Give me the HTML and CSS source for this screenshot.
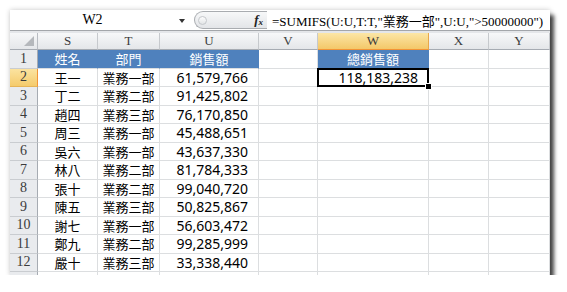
FILE: index.html
```html
<!DOCTYPE html>
<html lang="zh-Hant">
<head>
  <meta charset="UTF-8" />
  <title>SUMIFS</title>
  <link rel="stylesheet" href="styles.css">
</head>
<body>
  <div class="window">
    <div class="formula-bar">
      <div class="name-box">W2</div>
      <div class="name-arrow"></div>
      <div class="fx-pill">
        <span class="knob"></span>
        <span class="fx">f<sub>x</sub></span>
      </div>
      <div class="formula">=SUMIFS(U:U,T:T,"業務一部",U:U,"&gt;50000000")</div>
    </div>
    <div class="bar-sep"></div>

    <div class="sheet">
      <!-- column headers -->
      <div class="corner"><span class="tri"></span></div>
      <div class="ch">S</div>
      <div class="ch">T</div>
      <div class="ch">U</div>
      <div class="ch">V</div>
      <div class="ch sel">W</div>
      <div class="ch">X</div>
      <div class="ch">Y</div>

      <div class="rh">1</div>
      <div class="c hd">姓名</div>
      <div class="c hd">部門</div>
      <div class="c hd">銷售額</div>
      <div class="c"></div>
      <div class="c hd">總銷售額</div>
      <div class="c"></div>
      <div class="c"></div>

      <div class="rh sel">2</div>
      <div class="c">王一</div>
      <div class="c">業務一部</div>
      <div class="c num">61,579,766</div>
      <div class="c"></div>
      <div class="c num active">118,183,238</div>
      <div class="c"></div>
      <div class="c"></div>

      <div class="rh">3</div>
      <div class="c">丁二</div>
      <div class="c">業務二部</div>
      <div class="c num">91,425,802</div>
      <div class="c"></div><div class="c"></div><div class="c"></div><div class="c"></div>

      <div class="rh">4</div>
      <div class="c">趙四</div>
      <div class="c">業務三部</div>
      <div class="c num">76,170,850</div>
      <div class="c"></div><div class="c"></div><div class="c"></div><div class="c"></div>

      <div class="rh">5</div>
      <div class="c">周三</div>
      <div class="c">業務一部</div>
      <div class="c num">45,488,651</div>
      <div class="c"></div><div class="c"></div><div class="c"></div><div class="c"></div>

      <div class="rh">6</div>
      <div class="c">吳六</div>
      <div class="c">業務一部</div>
      <div class="c num">43,637,330</div>
      <div class="c"></div><div class="c"></div><div class="c"></div><div class="c"></div>

      <div class="rh">7</div>
      <div class="c">林八</div>
      <div class="c">業務二部</div>
      <div class="c num">81,784,333</div>
      <div class="c"></div><div class="c"></div><div class="c"></div><div class="c"></div>

      <div class="rh">8</div>
      <div class="c">張十</div>
      <div class="c">業務二部</div>
      <div class="c num">99,040,720</div>
      <div class="c"></div><div class="c"></div><div class="c"></div><div class="c"></div>

      <div class="rh">9</div>
      <div class="c">陳五</div>
      <div class="c">業務三部</div>
      <div class="c num">50,825,867</div>
      <div class="c"></div><div class="c"></div><div class="c"></div><div class="c"></div>

      <div class="rh">10</div>
      <div class="c">謝七</div>
      <div class="c">業務一部</div>
      <div class="c num">56,603,472</div>
      <div class="c"></div><div class="c"></div><div class="c"></div><div class="c"></div>

      <div class="rh">11</div>
      <div class="c">鄭九</div>
      <div class="c">業務二部</div>
      <div class="c num">99,285,999</div>
      <div class="c"></div><div class="c"></div><div class="c"></div><div class="c"></div>

      <div class="rh">12</div>
      <div class="c">嚴十</div>
      <div class="c">業務三部</div>
      <div class="c num">33,338,440</div>
      <div class="c"></div><div class="c"></div><div class="c"></div><div class="c"></div>

      <!-- row 13 is cut off by the window edge -->
      <div class="rh"></div>
      <div class="c"></div><div class="c"></div><div class="c"></div><div class="c"></div>
      <div class="c"></div><div class="c"></div><div class="c"></div>
    </div>
  </div>
</body>
</html>
```

FILE: styles.css
```css
body {
  margin: 0;
  background: #fff;
}

.window {
  margin: 10px 0 0 10px;
  width: 540px;
  height: 265px;
  overflow: hidden;
  background: #fff;
  box-shadow: 4px 5px 4px rgba(0, 0, 0, 0.72), 0 0 5px rgba(0, 0, 0, 0.22);
}

/* formula bar */
.formula-bar {
  display: flex;
  align-items: center;
  height: 20px;
  border-bottom: 1px solid #a3a6aa;
  font-family: "Liberation Serif", "Noto Sans CJK TC", serif;
  color: #000;
}

.name-box {
  width: 165px;
  text-align: center;
  font-size: 14px;
}

.name-arrow {
  width: 0;
  height: 0;
  margin: 1px 6px 0 4px;
  border-left: 3px solid transparent;
  border-right: 3px solid transparent;
  border-top: 4px solid #333;
}

.fx-pill {
  display: flex;
  align-items: center;
  justify-content: space-between;
  box-sizing: border-box;
  width: 73px;
  height: 18px;
  margin-left: 3px;
  padding: 0 4px 0 3px;
  border: 1px solid #a9acb0;
  border-right: none;
  border-radius: 9px 0 0 9px;
  background: linear-gradient(#f7f8f9, #e3e5e8);
}

.knob {
  width: 7px;
  height: 7px;
  border-radius: 50%;
  border: 1px solid #c4c7cb;
  background: linear-gradient(#fdfdfd, #e2e4e6);
}

.fx {
  font-size: 13px;
  font-style: italic;
  font-weight: bold;
  color: #222;
  line-height: 1;
}

.fx sub {
  font-size: 9px;
  vertical-align: -1px;
}

.formula {
  margin-left: 5px;
  font-size: 13px;
  white-space: nowrap;
}

.bar-sep {
  height: 2px;
  background: #e4e6e9;
}

/* grid */
.sheet {
  display: grid;
  grid-template-columns: 28px 60px 62px 99px 59px 111px 60px 61px;
  grid-template-rows: 17px repeat(13, 18.5px);
}

.sheet > div {
  box-sizing: border-box;
  display: flex;
  align-items: center;
  justify-content: center;
  white-space: nowrap;
}

.corner {
  position: relative;
  background: linear-gradient(#f6f7f8, #e5e7ea);
  border-right: 1px solid #b8bcc2;
  border-bottom: 1px solid #a6abb2;
}

.tri {
  position: absolute;
  right: 3px;
  bottom: 3px;
  width: 0;
  height: 0;
  border-left: 10px solid transparent;
  border-bottom: 10px solid #b5b8bc;
}

.ch {
  font-family: "Liberation Serif", serif;
  font-size: 13px;
  color: #3b3b3b;
  background: linear-gradient(#f7f8f9, #e4e6e9);
  border-right: 1px solid #c6c9cd;
  border-bottom: 1px solid #a6abb2;
}

.ch.sel {
  background: linear-gradient(#fbe6a6, #f3c869);
  border-right-color: #e8a84a;
  border-bottom: 1px solid #f29436;
}

.rh {
  font-family: "Liberation Serif", serif;
  font-size: 14px;
  color: #3b3b3b;
  background: #e9ebee;
  border-right: 1px solid #a6abb2;
  border-bottom: 1px solid #c9ccd0;
}

.rh.sel {
  background: linear-gradient(#fbe3a0, #f5cb6c);
  border-right: 1px solid #f29436;
  border-bottom-color: #e6b457;
}

.c {
  font-family: "Noto Sans CJK TC", sans-serif;
  font-size: 13px;
  color: #000;
  border-right: 1px solid #dcdee0;
  border-bottom: 1px solid #dcdee0;
}

.c.hd {
  color: #fff;
  background: #4f81bd;
  border-right-color: #4f81bd;
}

.c.num {
  justify-content: flex-end;
  padding-right: 10px;
  font-family: "Noto Sans", sans-serif;
  font-size: 14px;
}

.c.active {
  position: relative;
}

.c.active::after {
  content: "";
  position: absolute;
  left: -1px;
  top: -1px;
  right: -1px;
  bottom: -1px;
  border: 2px solid #000;
}

.c.active::before {
  content: "";
  position: absolute;
  right: -4px;
  bottom: -4px;
  width: 5px;
  height: 5px;
  background: #000;
  border: 1px solid #fff;
  z-index: 1;
}
```
